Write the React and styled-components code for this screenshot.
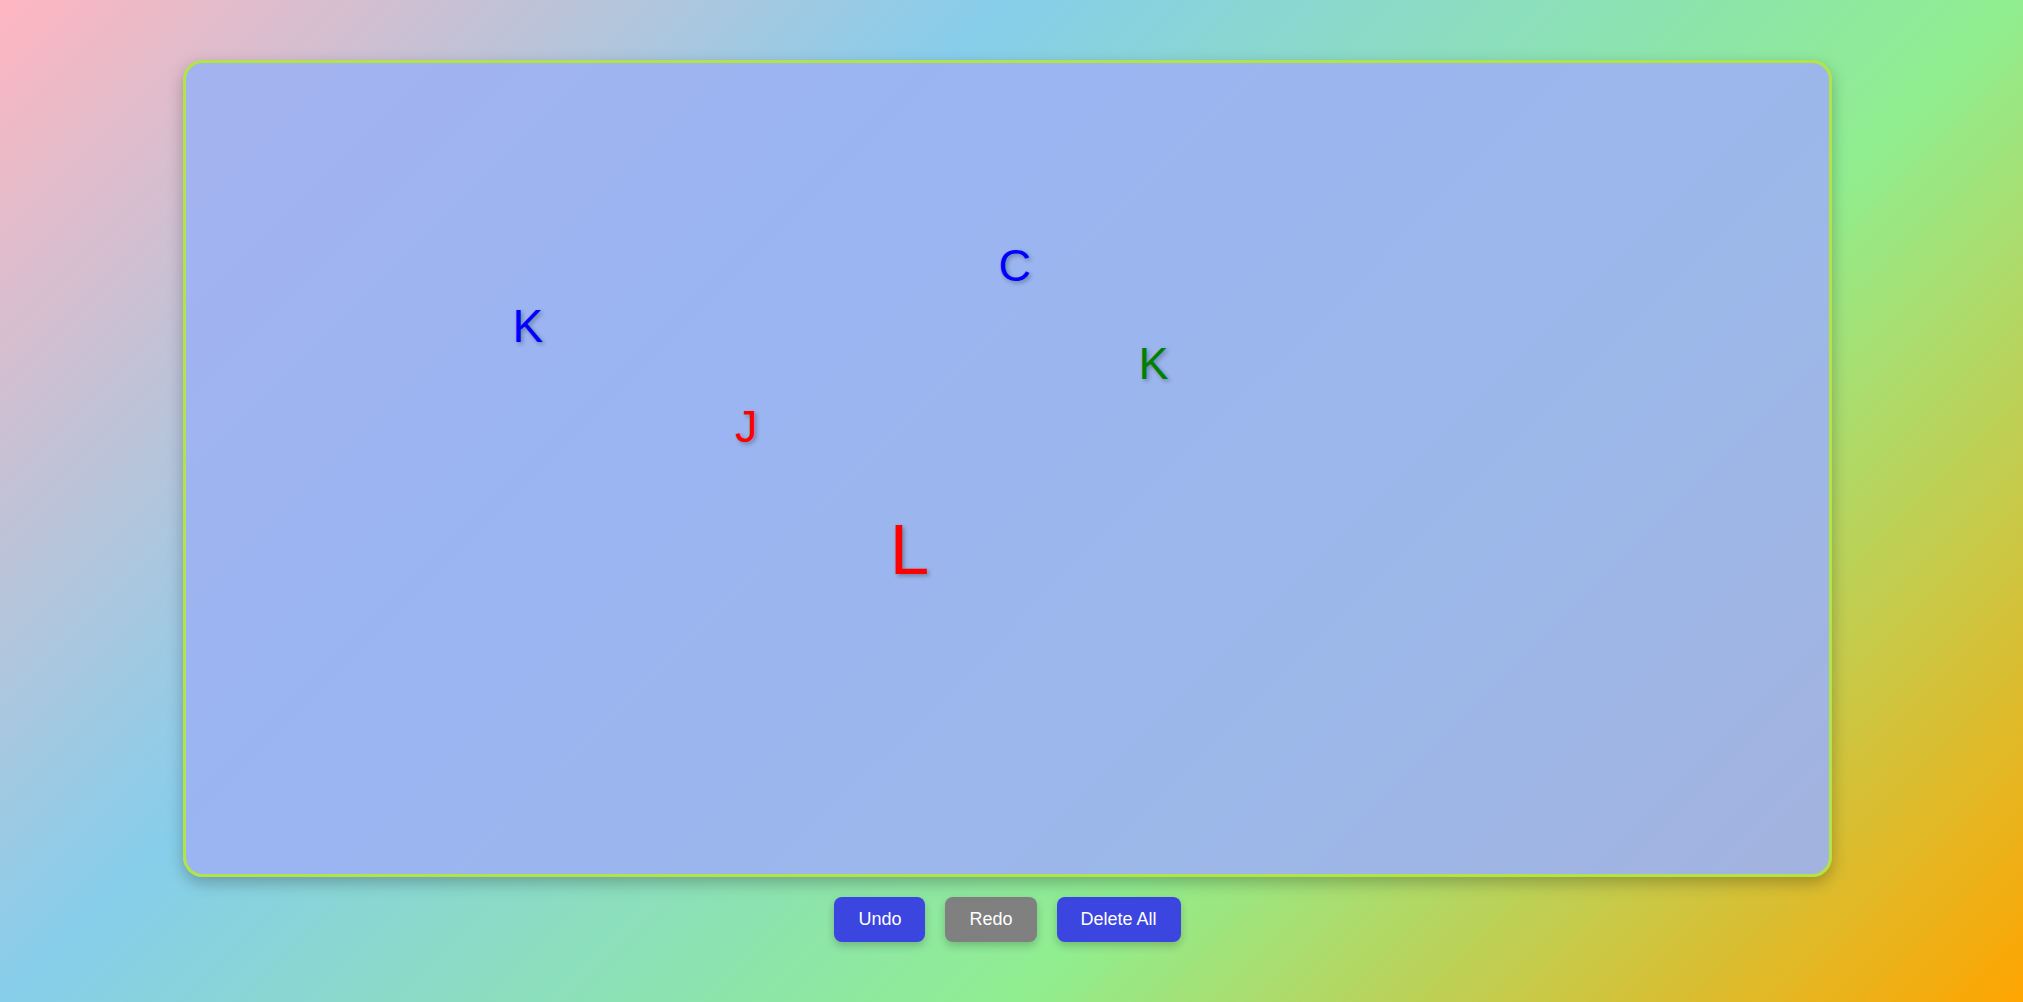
import React from 'react'
import styled, { createGlobalStyle } from 'styled-components'

const GlobalStyle = createGlobalStyle`
  html, body {
    margin: 0;
    padding: 0;
  }
  body {
    font-family: "Liberation Sans", Arial, sans-serif;
    background: linear-gradient(135deg, lightpink, skyblue, lightgreen, orange);
    min-height: 100vh;
    overflow: hidden;
  }
`

const letters = [
  { ch: 'K', color: '#0000ff', size: 46, x: 326.6, y: 240 },
  { ch: 'C', color: '#0000ff', size: 45, x: 812.4, y: 180 },
  { ch: 'K', color: '#008000', size: 45, x: 952.4, y: 278 },
  { ch: 'J', color: '#ff0000', size: 45, x: 549, y: 341.4 },
  { ch: 'L', color: '#ff0000', size: 71, x: 703.8, y: 451 },
]

const App = () => {
  return (
    <Page>
      <GlobalStyle />
      <Board>
        {letters.map((l, i) => (
          <Letter key={i} $color={l.color} $size={l.size} style={{ left: l.x, top: l.y }}>
            {l.ch}
          </Letter>
        ))}
      </Board>
      <Controls>
        <ActionButton>Undo</ActionButton>
        <ActionButton $muted>Redo</ActionButton>
        <ActionButton>Delete All</ActionButton>
      </Controls>
    </Page>
  )
}

const Page = styled.div`
  min-height: 100vh;
  box-sizing: border-box;
  padding-right: 8px;
  display: flex;
  flex-direction: column;
  align-items: center;
  justify-content: center;
  gap: 20px;
`

const Board = styled.div`
  position: relative;
  width: 1649px;
  height: 817px;
  box-sizing: border-box;
  border: 3px solid #b2e447;
  border-radius: 20px;
  background: rgba(156, 177, 243, 0.9);
  box-shadow: 0 6px 16px rgba(0, 0, 0, 0.25);
  overflow: hidden;
`

const Letter = styled.span`
  position: absolute;
  font-family: "Liberation Sans", Arial, sans-serif;
  font-size: ${p => p.$size}px;
  line-height: 1;
  color: ${p => p.$color};
  text-shadow: 2px 2px 4px rgba(0, 0, 0, 0.3);
  user-select: none;
`

const Controls = styled.div`
  display: flex;
  gap: 20px;
`

const ActionButton = styled.button`
  font-family: "Liberation Sans", Arial, sans-serif;
  font-size: 18px;
  padding: 12px 24px;
  border: none;
  border-radius: 8px;
  color: #fff;
  background: ${p => (p.$muted ? '#808080' : '#3b45e0')};
  box-shadow: 0 4px 8px rgba(0, 0, 0, 0.2);
  cursor: pointer;
`

export default App
